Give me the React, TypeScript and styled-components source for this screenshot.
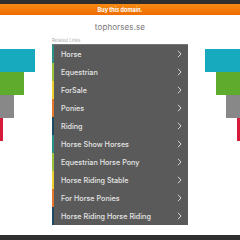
import React from 'react';
import styled, { createGlobalStyle } from 'styled-components';

const GlobalStyle = createGlobalStyle`
    html, body {
        margin: 0;
        padding: 0;
        background: #fff;
        font-family: Inter, "Noto Sans", sans-serif;
    }
`;

const Page = styled.div`
    width: 240px;
    height: 240px;
    display: flex;
    flex-direction: column;
    overflow: hidden;
`;

const TopBar = styled.div`
    height: 4px;
    background: #2f2f2f;
`;

const BuyBar = styled.div`
    height: 11px;
    background: linear-gradient(#f68a12, #ee6c00);
    color: #fff;
    font-size: 5.5px;
    font-weight: 700;
    display: flex;
    align-items: center;
    justify-content: center;
`;

const Domain = styled.div`
    height: 20px;
    display: flex;
    align-items: center;
    justify-content: center;
    color: #777;
    font-size: 8px;
    letter-spacing: 0.1px;
    padding-top: 2px;
`;

const Main = styled.div`
    flex: 1;
    display: grid;
    grid-template-columns: 52px 136px 52px;
`;

const Side = styled.div<{ $right?: boolean }>`
    padding-top: 12px;
    display: flex;
    flex-direction: column;
    align-items: ${(p) => (p.$right ? 'flex-end' : 'flex-start')};
`;

const Block = styled.div<{ $w: number; $c: string }>`
    width: ${(p) => p.$w}px;
    height: 23px;
    background: ${(p) => p.$c};
`;

const Center = styled.div`
    display: flex;
    flex-direction: column;
`;

const Caption = styled.div`
    height: 6px;
    font-size: 4.5px;
    color: #a8a8a8;
    display: flex;
    align-items: center;
`;

const List = styled.div`
    margin-top: 1px;
    background: #5a5a5a;
    border-top: 1px solid #777;
`;

const Row = styled.div<{ $c: string }>`
    height: 18px;
    box-sizing: border-box;
    border-left: 2px solid ${(p) => p.$c};
    padding: 0 6px 0 7px;
    display: flex;
    align-items: center;
    justify-content: space-between;
    color: #e6e6e6;
    font-size: 7.2px;
    font-weight: 500;
`;

const Chevron = () => (
    <svg width="5" height="8" viewBox="0 0 5 8">
        <path d="M1 0.8 L4 4 L1 7.2" fill="none" stroke="#e6e6e6" strokeWidth="0.9" />
    </svg>
);

const BottomBar = styled.div`
    margin-top: auto;
    height: 5px;
    background: #2f2f2f;
`;

const blocks = [
    { w: 35, c: '#17a9be' },
    { w: 24, c: '#5fab2d' },
    { w: 14, c: '#888888' },
    { w: 3, c: '#d61a3c' },
];

const stripe = ['#2a8f86', '#9cc23a', '#efcf2e', '#e4772a', '#1c4a63'];

const links = [
    'Horse',
    'Equestrian',
    'ForSale',
    'Ponies',
    'Riding',
    'Horse Show Horses',
    'Equestrian Horse Pony',
    'Horse Riding Stable',
    'For Horse Ponies',
    'Horse Riding Horse Riding',
];

export default function App() {
    return (
        <Page>
            <GlobalStyle />
            <TopBar />
            <BuyBar>Buy this domain.</BuyBar>
            <Domain>tophorses.se</Domain>
            <Main>
                <Side>
                    {blocks.map((b) => (
                        <Block key={b.c} $w={b.w} $c={b.c} />
                    ))}
                </Side>
                <Center>
                    <Caption>Related Links</Caption>
                    <List>
                        {links.map((l, i) => (
                            <Row key={l} $c={stripe[i % 5]}>
                                <span>{l}</span>
                                <Chevron />
                            </Row>
                        ))}
                    </List>
                </Center>
                <Side $right>
                    {blocks.map((b) => (
                        <Block key={b.c} $w={b.w} $c={b.c} />
                    ))}
                </Side>
            </Main>
            <BottomBar />
        </Page>
    );
}
